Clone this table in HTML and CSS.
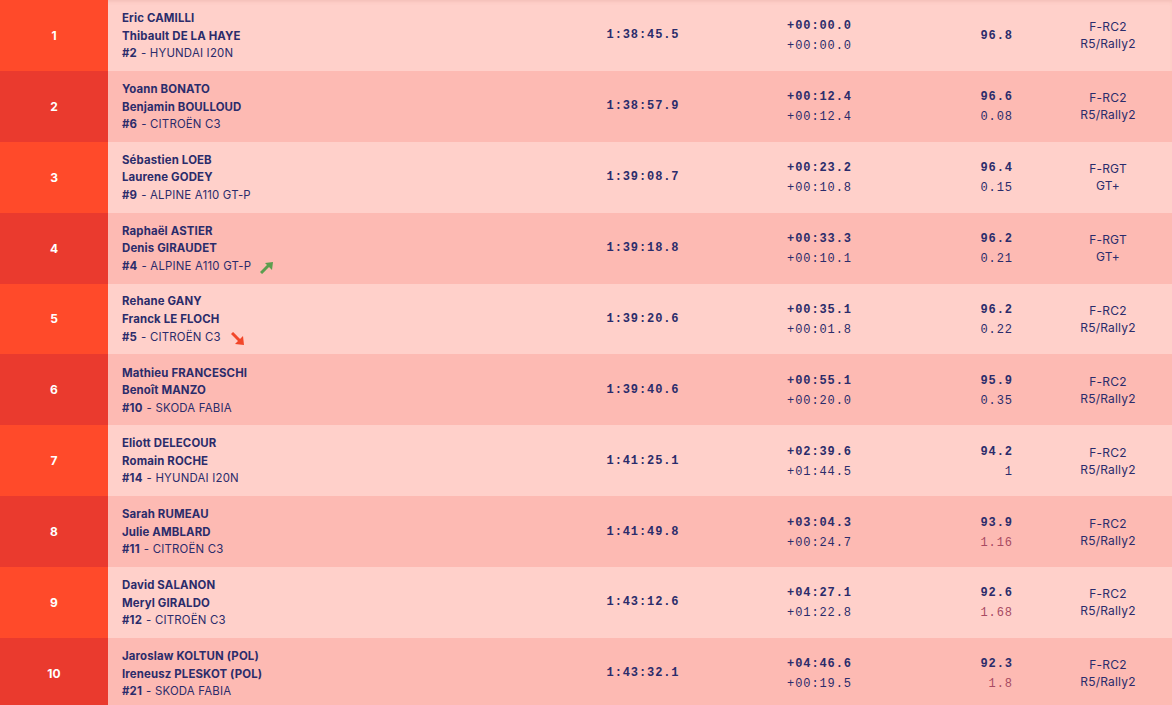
FILE: index.html
```html
<!DOCTYPE html>
<html lang="fr">
<head>
<meta charset="utf-8">
<title>Classement</title>
<link rel="stylesheet" href="styles.css">
</head>
<body>
<div class="table">
  <div class="row odd first">
    <div class="pos">1</div>
    <div class="crew"><div class="n">Eric CAMILLI</div><div class="n">Thibault DE LA HAYE</div><div class="car"><b>#2</b> - HYUNDAI I20N</div></div>
    <div class="time">1:38:45.5</div>
    <div class="gap"><div class="b">+00:00.0</div><div class="r">+00:00.0</div></div>
    <div class="speed"><div class="b">96.8</div></div>
    <div class="cls"><div>F-RC2</div><div>R5/Rally2</div></div>
  </div>
  <div class="row even">
    <div class="pos">2</div>
    <div class="crew"><div class="n">Yoann BONATO</div><div class="n">Benjamin BOULLOUD</div><div class="car"><b>#6</b> - CITROËN C3</div></div>
    <div class="time">1:38:57.9</div>
    <div class="gap"><div class="b">+00:12.4</div><div class="r">+00:12.4</div></div>
    <div class="speed"><div class="b">96.6</div><div class="r">0.08</div></div>
    <div class="cls"><div>F-RC2</div><div>R5/Rally2</div></div>
  </div>
  <div class="row odd">
    <div class="pos">3</div>
    <div class="crew"><div class="n">Sébastien LOEB</div><div class="n">Laurene GODEY</div><div class="car"><b>#9</b> - ALPINE A110 GT-P</div></div>
    <div class="time">1:39:08.7</div>
    <div class="gap"><div class="b">+00:23.2</div><div class="r">+00:10.8</div></div>
    <div class="speed"><div class="b">96.4</div><div class="r">0.15</div></div>
    <div class="cls"><div>F-RGT</div><div>GT+</div></div>
  </div>
  <div class="row even">
    <div class="pos">4</div>
    <div class="crew"><div class="n">Raphaël ASTIER</div><div class="n">Denis GIRAUDET</div><div class="car"><b>#4</b> - ALPINE A110 GT-P<svg class="arrow up" viewBox="0 0 14 12" width="14" height="12"><path d="M1 11 L9 3" stroke="#5b9e4f" stroke-width="3" fill="none"/><path d="M5 1 L13 0 L12 8 Z" fill="#5b9e4f"/></svg></div></div>
    <div class="time">1:39:18.8</div>
    <div class="gap"><div class="b">+00:33.3</div><div class="r">+00:10.1</div></div>
    <div class="speed"><div class="b">96.2</div><div class="r">0.21</div></div>
    <div class="cls"><div>F-RGT</div><div>GT+</div></div>
  </div>
  <div class="row odd">
    <div class="pos">5</div>
    <div class="crew"><div class="n">Rehane GANY</div><div class="n">Franck LE FLOCH</div><div class="car"><b>#5</b> - CITROËN C3<svg class="arrow down" viewBox="0 0 14 14" width="14" height="14"><path d="M1 1 L9 9" stroke="#f2472a" stroke-width="3" fill="none"/><path d="M12 4 L13 13 L4 12 Z" fill="#f2472a"/></svg></div></div>
    <div class="time">1:39:20.6</div>
    <div class="gap"><div class="b">+00:35.1</div><div class="r">+00:01.8</div></div>
    <div class="speed"><div class="b">96.2</div><div class="r">0.22</div></div>
    <div class="cls"><div>F-RC2</div><div>R5/Rally2</div></div>
  </div>
  <div class="row even">
    <div class="pos">6</div>
    <div class="crew"><div class="n">Mathieu FRANCESCHI</div><div class="n">Benoît MANZO</div><div class="car"><b>#10</b> - SKODA FABIA</div></div>
    <div class="time">1:39:40.6</div>
    <div class="gap"><div class="b">+00:55.1</div><div class="r">+00:20.0</div></div>
    <div class="speed"><div class="b">95.9</div><div class="r">0.35</div></div>
    <div class="cls"><div>F-RC2</div><div>R5/Rally2</div></div>
  </div>
  <div class="row odd">
    <div class="pos">7</div>
    <div class="crew"><div class="n">Eliott DELECOUR</div><div class="n">Romain ROCHE</div><div class="car"><b>#14</b> - HYUNDAI I20N</div></div>
    <div class="time">1:41:25.1</div>
    <div class="gap"><div class="b">+02:39.6</div><div class="r">+01:44.5</div></div>
    <div class="speed"><div class="b">94.2</div><div class="r">1</div></div>
    <div class="cls"><div>F-RC2</div><div>R5/Rally2</div></div>
  </div>
  <div class="row even">
    <div class="pos">8</div>
    <div class="crew"><div class="n">Sarah RUMEAU</div><div class="n">Julie AMBLARD</div><div class="car"><b>#11</b> - CITROËN C3</div></div>
    <div class="time">1:41:49.8</div>
    <div class="gap"><div class="b">+03:04.3</div><div class="r">+00:24.7</div></div>
    <div class="speed"><div class="b">93.9</div><div class="r hot">1.16</div></div>
    <div class="cls"><div>F-RC2</div><div>R5/Rally2</div></div>
  </div>
  <div class="row odd">
    <div class="pos">9</div>
    <div class="crew"><div class="n">David SALANON</div><div class="n">Meryl GIRALDO</div><div class="car"><b>#12</b> - CITROËN C3</div></div>
    <div class="time">1:43:12.6</div>
    <div class="gap"><div class="b">+04:27.1</div><div class="r">+01:22.8</div></div>
    <div class="speed"><div class="b">92.6</div><div class="r hot">1.68</div></div>
    <div class="cls"><div>F-RC2</div><div>R5/Rally2</div></div>
  </div>
  <div class="row even">
    <div class="pos">10</div>
    <div class="crew"><div class="n">Jaroslaw KOLTUN (POL)</div><div class="n">Ireneusz PLESKOT (POL)</div><div class="car"><b>#21</b> - SKODA FABIA</div></div>
    <div class="time">1:43:32.1</div>
    <div class="gap"><div class="b">+04:46.6</div><div class="r">+00:19.5</div></div>
    <div class="speed"><div class="b">92.3</div><div class="r hot">1.8</div></div>
    <div class="cls"><div>F-RC2</div><div>R5/Rally2</div></div>
  </div>
</div>
</body>
</html>
```
FILE: styles.css
```css
html, body {
  margin: 0;
  padding: 0;
  background: #ffb9b3;
  overflow: hidden;
}
body {
  font-family: "Inter", "Liberation Sans", sans-serif;
  color: #2b2c6b;
}
.table {
  display: flex;
  flex-direction: column;
}
.row {
  display: grid;
  grid-template-columns: 108px 472px 126px 145px 193px 128px;
  height: 70.875px;
  align-items: center;
}
.row.odd { background: #ffd0ca; }
.row.even { background: #fdbab3; }
.row.first { box-shadow: inset 0 3px 4px -2px rgba(180, 90, 80, 0.18); }
.pos {
  align-self: stretch;
  display: flex;
  align-items: center;
  justify-content: center;
  color: #fff;
  font-weight: 700;
  font-size: 12px;
}
.odd .pos { background: #ff4a2a; }
.even .pos { background: #ea3a2e; }
.crew {
  padding-left: 14px;
  padding-top: 2px;
  font-size: 11.4px;
  line-height: 17.5px;
}
.crew .n {
  font-weight: 700;
  letter-spacing: 0.15px;
}
.car {
  display: flex;
  align-items: center;
  font-weight: 400;
  letter-spacing: 0.2px;
}
.car b {
  font-weight: 700;
  margin-right: 4px;
}
.arrow {
  margin-left: 9px;
}
.arrow.up { margin-top: 2px; }
.arrow.down { margin-left: 10px; margin-top: 4px; }
.time {
  text-align: center;
  font-family: "Liberation Mono", monospace;
  font-weight: 700;
  font-size: 12px;
  letter-spacing: 0.9px;
}
.gap, .speed {
  font-family: "Liberation Mono", monospace;
  font-size: 12px;
  line-height: 20px;
  padding-top: 2px;
  text-align: right;
  letter-spacing: 0.9px;
  margin-right: -0.9px;
}
.speed {
  padding-right: 32px;
}
.b { font-weight: 700; }
.r { font-weight: 400; }
.hot { color: #a84a62; }
.cls {
  text-align: center;
  font-size: 12px;
  line-height: 17px;
  padding-top: 0;
  letter-spacing: 0.2px;
}
```
